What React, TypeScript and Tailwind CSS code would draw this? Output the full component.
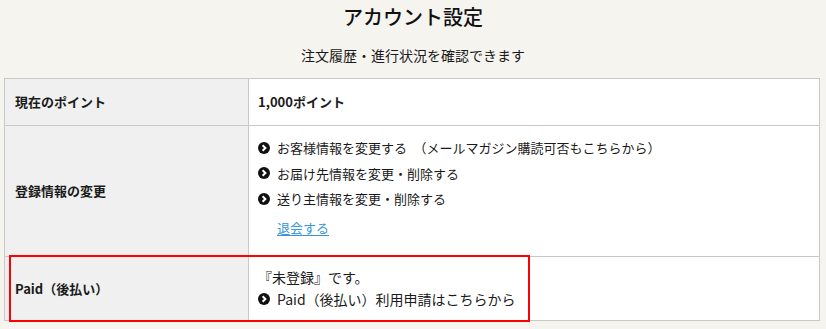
import React from "react";

const font = "font-['Noto_Sans_CJK_JP','Noto_Sans',sans-serif]";

function Chevron() {
    return (
        <svg width="12" height="12" viewBox="0 0 12 12" className="shrink-0">
            <circle cx="6" cy="6" r="6" fill="#111"/>
            <path d="M4.6 3.2 L7.4 6 L4.6 8.8" stroke="#fff" strokeWidth="2" fill="none"/>
        </svg>
    );
}

function LinkItem({children}: { children: React.ReactNode }) {
    return (
        <div className="flex items-center gap-[7px] h-[25.5px]">
            <Chevron/>
            <span>{children}</span>
        </div>
    );
}

export default function App() {
    return (
        <div className={`relative w-[826px] h-[329px] bg-[#f6f4ef] text-[#1a1a1a] ${font}`}>
            <h1 className="pt-[3px] text-center text-[20px] leading-[28px] font-medium text-[#111]">アカウント設定</h1>
            <p className="mt-[14px] text-center text-[14px] leading-[20px]">注文履歴・進行状況を確認できます</p>
            <table className="ml-[4px] mt-[13px] w-[816px] border-collapse border border-[#c8c8c8] text-[13px]">
                <tbody>
                <tr className="h-[47px]">
                    <th className="w-[244px] border border-[#c8c8c8] bg-[#f0f0f0] pl-[10px] text-left font-bold">
                        現在のポイント
                    </th>
                    <td className="border border-[#c8c8c8] bg-white pl-[9px] font-bold">1,000ポイント</td>
                </tr>
                <tr className="h-[131px]">
                    <th className="border border-[#c8c8c8] bg-[#f0f0f0] pl-[10px] text-left font-bold">
                        登録情報の変更
                    </th>
                    <td className="border border-[#c8c8c8] bg-white pl-[9px] pt-[9px] pb-[10px] align-top">
                        <LinkItem>お客様情報を変更する　（メールマガジン購読可否もこちらから）</LinkItem>
                        <LinkItem>お届け先情報を変更・削除する</LinkItem>
                        <LinkItem>送り主情報を変更・削除する</LinkItem>
                        <div className="mt-[5px] pl-[19px] leading-[22px]">
                            <a className="text-[#3a97d6] underline underline-offset-2">退会する</a>
                        </div>
                    </td>
                </tr>
                <tr className="h-[64px]">
                    <th className="border border-[#c8c8c8] bg-[#f0f0f0] pl-[10px] text-left font-bold">
                        Paid（後払い）
                    </th>
                    <td className="border border-[#c8c8c8] bg-white pl-[9px] text-[14px]">
                        <div className="leading-[22px] -mt-[1px]">『未登録』です。</div>
                        <div className="flex items-center gap-[7px] leading-[22px]">
                            <Chevron/>
                            <span>Paid（後払い）利用申請はこちらから</span>
                        </div>
                    </td>
                </tr>
                </tbody>
            </table>
            <div className="absolute left-[9px] top-[255px] w-[521px] h-[67px] border-2 border-[#ff0000]"/>
        </div>
    );
}
